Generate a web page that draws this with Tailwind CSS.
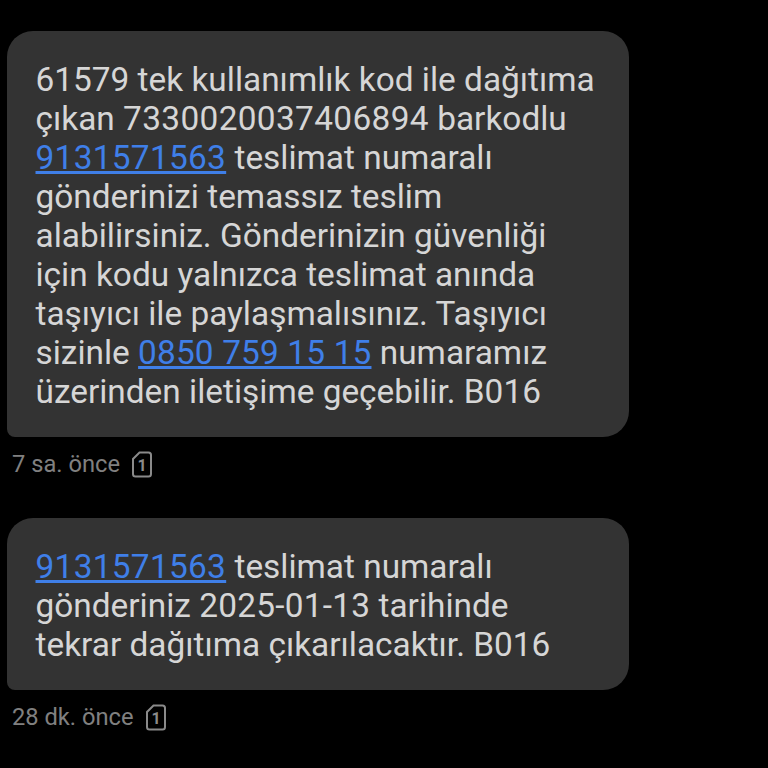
<!DOCTYPE html>
<html lang="tr">
<head>
  <meta charset="UTF-8" />
  <title>Mesajlar</title>
  <script src="https://cdn.jsdelivr.net/npm/@tailwindcss/browser@4"></script>
</head>
<body class="bg-black w-[768px] h-[768px] overflow-hidden font-['Roboto',sans-serif] antialiased">
  <main class="flex flex-col pt-[31px] pl-[7px]">
    <!-- First message -->
    <div class="w-[622px] h-[406px] bg-[#333333] rounded-[26px] rounded-bl-[8px] pt-[29px] pl-[28.500px] text-[33.4px] leading-[39px] text-[#d6d6d6] whitespace-nowrap">
      <p>61579 tek kullanımlık kod ile dağıtıma</p>
      <p>çıkan <span class="tracking-[0.35px]">7330020037406894</span> barkodlu</p>
      <p><a class="text-[#3f7fe8] underline tracking-[0.3px]">9131571563</a> teslimat numaralı</p>
      <p>gönderinizi temassız teslim</p>
      <p>alabilirsiniz. Gönderinizin güvenliği</p>
      <p>için kodu yalnızca teslimat anında</p>
      <p>taşıyıcı ile paylaşmalısınız. Taşıyıcı</p>
      <p>sizinle <a class="text-[#3f7fe8] underline tracking-[0.15px]">0850 759 15 15</a> numaramız</p>
      <p>üzerinden iletişime geçebilir. B016</p>
    </div>
    <div class="flex items-center gap-[12px] mt-[13px] ml-[5px] h-[28px] text-[23.7px] text-[#808080]">
      <span class="pt-[1px]">7 sa. önce</span>
      <svg class="w-[20px] h-[27px]" viewBox="0 0 20 27" fill="none" stroke="#8a8a8a" stroke-width="2">
        <path d="M7.500 1.500h9a2.500 2.500 0 0 1 2.500 2.500v19a2.500 2.500 0 0 1-2.500 2.500h-13A2.500 2.500 0 0 1 1 23V8z" />
        <text x="10" y="19.500" text-anchor="middle" font-size="16" font-weight="700" fill="#8a8a8a" stroke="none">1</text>
      </svg>
    </div>
    <!-- Second message -->
    <div class="w-[622px] h-[172px] mt-[40px] bg-[#333333] rounded-[26px] rounded-bl-[8px] pt-[29px] pl-[28.500px] text-[33.4px] leading-[39px] text-[#d6d6d6] whitespace-nowrap">
      <p><a class="text-[#3f7fe8] underline tracking-[0.3px]">9131571563</a> teslimat numaralı</p>
      <p>gönderiniz <span class="tracking-[0.25px]">2025-01-13</span> tarihinde</p>
      <p>tekrar dağıtıma çıkarılacaktır. B016</p>
    </div>
    <div class="flex items-center gap-[12px] mt-[13px] ml-[5px] h-[28px] text-[23.7px] text-[#808080]">
      <span class="pt-[1px]">28 dk. önce</span>
      <svg class="w-[20px] h-[27px]" viewBox="0 0 20 27" fill="none" stroke="#8a8a8a" stroke-width="2">
        <path d="M7.500 1.500h9a2.500 2.500 0 0 1 2.500 2.500v19a2.500 2.500 0 0 1-2.500 2.500h-13A2.500 2.500 0 0 1 1 23V8z" />
        <text x="10" y="19.500" text-anchor="middle" font-size="16" font-weight="700" fill="#8a8a8a" stroke="none">1</text>
      </svg>
    </div>
  </main>
</body>
</html>
